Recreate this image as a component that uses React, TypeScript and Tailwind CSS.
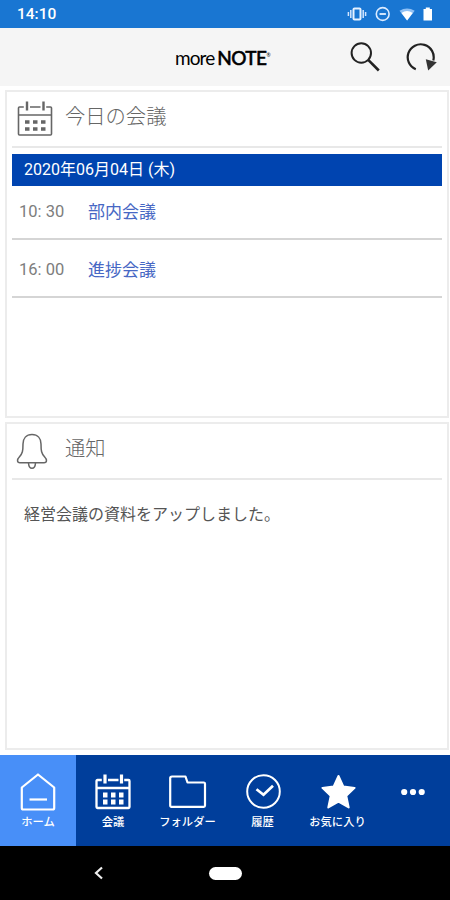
import type { ReactNode } from "react";

const MEETINGS = [
  { time: "10: 30", title: "部内会議" },
  { time: "16: 00", title: "進捗会議" },
];

function StatusBar() {
  return (
    <div className="flex h-7 shrink-0 items-center justify-between bg-[#1976d2] pl-[17px] pr-[15px] text-white">
      <span className="pt-0.5 text-[15.5px] font-medium leading-none">14:10</span>
      <svg width="88" height="18" viewBox="0 0 88 18" fill="none">
        <rect x="6.5" y="3.5" width="7" height="11" rx="1" stroke="#e6f1ff" strokeWidth="2" />
        <path d="M3.8 5v8M16.2 5v8M1.4 7v4M18.6 7v4" stroke="#d3e6ff" strokeWidth="1.5" />
        <circle cx="35.7" cy="9" r="6.4" stroke="#dcebff" strokeWidth="1.6" />
        <path d="M32.5 9h6.4" stroke="#e6f1ff" strokeWidth="1.8" />
        <path d="M52.5 5.8Q60 1.4 67.7 5.8L60.1 15.5Z" fill="#8fc0f5" />
        <path d="M54.5 8Q60 4 65.7 8L60.1 15.5Z" fill="#fff" />
        <path d="M76.5 4h2.3V2.4h4V4H85v11.5h-8.5z" fill="#fff" />
      </svg>
    </div>
  );
}

function Header() {
  return (
    <header className="flex h-[58px] shrink-0 items-center justify-between bg-[#f5f5f5] pl-[175px] pr-3">
      <h1 className="flex items-baseline font-['Lato',sans-serif] leading-none text-black">
        <span className="text-[19px] tracking-[-0.9px]">more</span>
        <span className="ml-[3px] text-[19px] font-medium tracking-[-0.6px] [-webkit-text-stroke:0.5px_black]">NOTE</span>
        <span className="-translate-y-2 text-[5px]">®</span>
      </h1>
      <div className="flex items-center gap-[25px]">
        <svg width="32" height="32" viewBox="0 0 32 32" fill="none" stroke="#222">
          <circle cx="12.3" cy="12" r="9.7" strokeWidth="2" />
          <path d="M19.2 18.8 29.8 29.5" strokeWidth="2.6" />
        </svg>
        <svg width="32" height="32" viewBox="0 0 32 32" fill="none">
          <path d="M9.8 28.3A13 13 0 1 1 27.3 19.5" stroke="#222" strokeWidth="2.2" />
          <path d="M19.8 18.2 30.8 21.3 22.2 29.4Z" fill="#333" />
        </svg>
      </div>
    </header>
  );
}

function CalendarIcon({ bold = false }: { bold?: boolean }) {
  return (
    <svg width="38" height="40" viewBox="0 0 38 40" fill="none" stroke="currentColor" strokeWidth={bold ? 2.3 : 1.6}>
      <path d="M7.8 8H3.5q-1 0-1 1v26q0 1 1 1h31q1 0 1-1V9q0-1-1-1h-4.3M14 8h10.5" />
      <path d="M2.5 16h33" />
      <path d="M11 2.5v9M27.5 2.5v9" strokeWidth={bold ? 3.2 : 2.4} />
      <path
        d="M9 23h4.5M17 23h4.5M25 23h4.5M9 30h4.5M17 30h4.5M25 30h4.5"
        strokeWidth={bold ? 5 : 3.6}
      />
    </svg>
  );
}

function BellIcon() {
  return (
    <svg width="32" height="37" viewBox="0 0 32 37" fill="none" stroke="#666" strokeWidth="1.5" strokeLinejoin="round">
      <path d="M16 1.5c-5.8 0-9 4-9 9.5 0 7-.5 9.5-3.5 12.7C.8 26.5.8 29.7 4 29.7h24c3.2 0 3.2-3.2.5-6C25.500 20.500 25 18 25 11c0-5.500-3.200-9.500-9-9.500Z" />
      <path d="M12.500 30c.2 3 1.500 5.300 3.500 5.300s3.300-2.300 3.500-5.300" />
    </svg>
  );
}

function Panel({ icon, title, children }: { icon: ReactNode; title: string; children: ReactNode }) {
  return (
    <section className="h-[328px] shrink-0 border-2 border-[#ececec] pl-[5px] pr-[5px]">
      <div className="flex h-14 items-center border-b-2 border-[#e8e8e8] text-[#666]">
        <div className="flex w-[53px] justify-start pl-1">{icon}</div>
        <h2 className="pb-1 text-[20.3px] font-light leading-none text-[#666]">{title}</h2>
      </div>
      {children}
    </section>
  );
}

const NAV_ITEMS = [
  {
    label: "ホーム",
    icon: (
      <svg width="38" height="40" viewBox="0 0 38 40" fill="none" stroke="currentColor" strokeWidth="2.2" strokeLinejoin="round">
        <path d="M19 2.500 35.200 15.500V36q0 1.500-1.500 1.500H4.300q-1.500 0-1.500-1.500V15.500Z" />
        <path d="M10.500 27.500h17.500" />
      </svg>
    ),
  },
  { label: "会議", icon: <CalendarIcon bold /> },
  {
    label: "フォルダー",
    icon: (
      <svg width="38" height="40" viewBox="0 0 38 40" fill="none" stroke="currentColor" strokeWidth="2.2" strokeLinejoin="round">
        <path d="M3 4.500h13.500l2 6h16.200q1.300 0 1.300 1.300V33.500q0 1.300-1.300 1.300H2.500q-1.300 0-1.300-1.300V6Q1.200 4.500 3 4.500Z" />
      </svg>
    ),
  },
  {
    label: "履歴",
    icon: (
      <svg width="38" height="40" viewBox="0 0 38 40" fill="none" stroke="currentColor" strokeWidth="2">
        <circle cx="19.500" cy="19.500" r="16.300" />
        <path d="m12.500 17.200 7 5.500 9.500-9" strokeWidth="2.700" />
      </svg>
    ),
  },
  {
    label: "お気に入り",
    icon: (
      <svg width="38" height="40" viewBox="0 0 38 40" fill="currentColor" stroke="currentColor" strokeWidth="2" strokeLinejoin="round">
        <path d="m19.500 4 4.900 10.600 11.200 1.300-8.300 8 2.400 11.600-10.200-5.800-10.200 5.800 2.400-11.600-8.300-8 11.200-1.300Z" />
      </svg>
    ),
  },
];

function BottomNav() {
  return (
    <nav className="grid h-[91px] shrink-0 grid-cols-[76px_74px_75px_75px_75px_75px] bg-[#003e9b] text-white">
      {NAV_ITEMS.map((item, i) => (
        <button
          key={item.label}
          className={`flex flex-col items-center pt-[17px] ${i === 0 ? "bg-[#488ff8]" : ""}`}
        >
          {item.icon}
          <span className="mt-1 whitespace-nowrap text-[11.3px] font-medium leading-[13px]">{item.label}</span>
        </button>
      ))}
      <button className="flex items-start justify-center pt-[33px]">
        <svg width="26" height="8" viewBox="0 0 26 8" fill="currentColor">
          <circle cx="4.200" cy="4" r="3.100" />
          <circle cx="13" cy="4" r="3.100" />
          <circle cx="21.700" cy="4" r="3.100" />
        </svg>
      </button>
    </nav>
  );
}

export default function App() {
  return (
    <div className="flex h-[900px] w-[450px] flex-col overflow-hidden bg-white font-['Roboto','Noto_Sans_CJK_JP',sans-serif]">
      <StatusBar />
      <Header />
      <main className="flex flex-1 flex-col gap-1 pl-[5px] pr-px pt-1">
        <Panel icon={<CalendarIcon />} title="今日の会議">
          <div className="mt-1.5 flex h-8 items-center bg-[#0044b0] pl-3 text-[16px] text-white">2020年06月04日 (木)</div>
          {MEETINGS.map((m, i) => (
            <div
              key={m.title}
              className={`flex items-center border-b-2 border-[#d5d5d5] pl-[7px] leading-none ${i === 0 ? "h-[54px]" : "h-[58px] pt-1"}`}
            >
              <span className="w-[69px] text-[16.5px] text-[#7d7d7d]">{m.time}</span>
              <span className="text-[17px] text-[#4767c4]">{m.title}</span>
            </div>
          ))}
        </Panel>
        <Panel icon={<BellIcon />} title="通知">
          <p className="pl-3 pt-[27px] text-[16px] leading-4 text-[#555]">経営会議の資料をアップしました。</p>
        </Panel>
      </main>
      <BottomNav />
      <div className="grid h-[54px] shrink-0 grid-cols-[1fr_auto_1fr] items-center bg-black">
        <svg className="ml-[94px]" width="10" height="14" viewBox="0 0 10 14" fill="none" stroke="#eee" strokeWidth="2.200">
          <path d="M8 1.500 2 7l6 5.500" />
        </svg>
        <div className="h-[13px] w-[33px] rounded-full bg-white" />
      </div>
    </div>
  );
}
